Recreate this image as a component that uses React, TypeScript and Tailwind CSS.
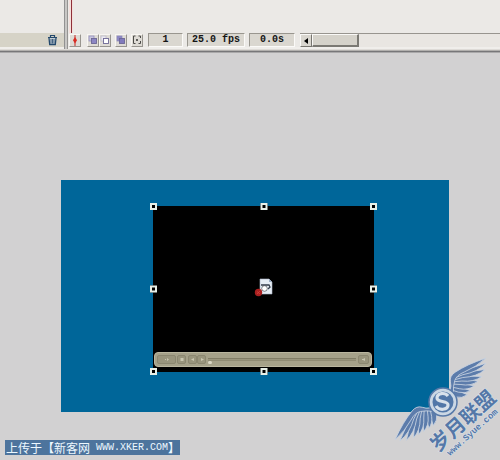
import React from "react";

type ToolProps = { label: string; children: React.ReactNode; className?: string };

function Tool({ label, children, className = "" }: ToolProps) {
  return (
    <button
      type="button"
      aria-label={label}
      className={`flex h-[13px] w-3 shrink-0 items-center justify-center border border-t-[#f8f6f2] border-l-[#f8f6f2] border-r-[#98958f] border-b-[#98958f] bg-[#dedbd5] ${className}`}
    >
      {children}
    </button>
  );
}

function Readout({ children, className }: { children: string; className: string }) {
  return (
    <output
      className={`flex h-[14px] shrink-0 items-center justify-center border border-t-[#99968f] border-l-[#99968f] border-r-[#fbfaf8] border-b-[#fbfaf8] bg-[#dad7d0] font-['Liberation_Mono',monospace] text-[10px] leading-3 font-bold whitespace-pre text-[#151515] ${className}`}
    >
      {children}
    </output>
  );
}

function Onion({ back, front }: { back: string; front: string }) {
  return (
    <svg viewBox="0 0 10 10" className="h-[10px] w-[10px] shrink-0">
      <rect x="1" y="1" width="5" height="5" fill={back} stroke={back === "#eceaf2" ? "#b8b5c6" : "#8b86bd"} strokeWidth="0.7" />
      <rect x="3.5" y="3.5" width="5" height="5" fill={front} stroke="#6d6795" strokeWidth="0.9" />
    </svg>
  );
}

function Timeline() {
  return (
    <header className="flex h-[50px] border-b border-[#dedbd7] bg-[#ebe9e6]">
      <section aria-label="Layers" className="flex w-16 shrink-0 flex-col">
        <div className="flex-1" />
        <div className="flex h-[14px] items-center justify-end bg-[#d6d3c7] pr-[6px]">
          <button type="button" aria-label="Delete layer">
            <svg viewBox="0 0 11 12" className="h-3 w-[11px]" fill="none" stroke="#24496c">
              <path d="M1 3.5h9M3.5 3V1.5h4V3" strokeWidth="1.2" />
              <path d="M2 4l.7 6.5h5.6L9 4" fill="#c4ced5" strokeWidth="1.3" />
              <path d="M4 5v4.5M5.5 5v4.5M7 5v4.5" strokeWidth=".8" />
            </svg>
          </button>
        </div>
        <div className="h-[2px] bg-[#f0eeeb]" />
      </section>
      <div className="w-1 shrink-0 border-x border-l-[#929292] border-r-[#969492] bg-[#c8c7c5]" />
      <section aria-label="Frames" className="flex min-w-0 flex-1 flex-col">
        <div className="flex flex-1 pl-px">
          <div className="flex w-1 justify-center bg-[#f4dfdb]">
            <div className="w-px bg-[#8f3039]" />
          </div>
        </div>
        <div className="flex h-[14px] items-center">
          <Tool label="Center frame" className="ml-px">
            <svg viewBox="0 0 8 11" className="h-[11px] w-2">
              <path d="M4 0v11" stroke="#c52d29" strokeWidth="1" />
              <path d="M4 2l2 3.2L4 8.5 2 5.2z" fill="#d92c23" />
            </svg>
          </Tool>
          <Tool label="Onion skin" className="ml-[6px]">
            <Onion back="#c9c6dd" front="#8c86c4" />
          </Tool>
          <Tool label="Onion skin outlines">
            <Onion back="#eceaf2" front="#ffffff" />
          </Tool>
          <Tool label="Edit multiple frames" className="ml-1">
            <Onion back="#8d87c4" front="#817bbd" />
          </Tool>
          <Tool label="Modify onion markers" className="ml-1">
            <svg viewBox="0 0 10 10" className="h-[10px] w-[10px] shrink-0" fill="none" stroke="#4c4b48">
              <path d="M3.5 1H1.5v7.5h2M6.5 1h2v2M8.5 6v2.5h-2M5 4v2" />
              <path d="M4 5h2" strokeWidth="1.4" />
            </svg>
          </Tool>
          <Readout className="ml-[5px] w-[35px]">1</Readout>
          <Readout className="ml-1 w-[58px]">25.0 fps</Readout>
          <Readout className="ml-1 w-[46px]">0.0s</Readout>
          <div className="ml-[5px] flex h-[14px] flex-1 border-t border-[#98958f] bg-[#e9e6e2]">
            <button
              type="button"
              aria-label="Scroll left"
              className="flex w-3 items-center justify-center border border-t-[#faf9f7] border-l-[#faf9f7] border-r-[#77756f] border-b-[#77756f] bg-[#d9d6cf]"
            >
              <svg viewBox="0 0 4 6" className="h-[6px] w-1">
                <path d="M4 0v6L0 3z" fill="#000" />
              </svg>
            </button>
            <div className="w-[47px] border border-t-[#faf9f7] border-l-[#faf9f7] border-r-2 border-b-2 border-r-[#7b7973] border-b-[#7b7973] bg-[#d5d2ca]" />
          </div>
        </div>
        <div className="h-[2px] bg-[#f0eeeb]" />
      </section>
    </header>
  );
}

function Handle({ className }: { className: string }) {
  return <span className={`absolute h-[7px] w-[7px] border-2 border-[#e8f0e8] bg-black ${className}`} />;
}

function PlayerButton({ label, className, d }: { label: string; className: string; d: string }) {
  return (
    <button
      type="button"
      aria-label={label}
      className={`flex h-[9px] shrink-0 items-center justify-center rounded-[2px] border border-[#8b8770] bg-[#99957d] ${className}`}
    >
      <svg viewBox="0 0 6 5" className="h-[5px] w-[6px]">
        <path d={d} fill="#c9c6b0" />
      </svg>
    </button>
  );
}

function Video() {
  return (
    <div className="relative flex h-[166px] flex-col bg-black pr-[2px] pl-px">
      <div className="flex h-[146px] items-center justify-center pt-4 pr-px">
        <svg viewBox="0 0 20 20" className="h-5 w-5" aria-label="Media clip">
          <path d="M7 2h9l3 3v12H7z" fill="#e6edf5" stroke="#a9b4c5" strokeWidth=".6" />
          <path d="M16 2v3h3" fill="#9aabc3" />
          <path d="M8 8h8l1 2-2 2" fill="none" stroke="#343d4b" strokeWidth="1.3" />
          <circle cx="11.5" cy="11.5" r="2.8" fill="#fff" stroke="#32373e" strokeWidth=".6" />
          <circle cx="5.5" cy="15.5" r="3.7" fill="#a92020" />
          <path d="M4 17l3-3M4 14.5l3 2.5" stroke="#d9483f" strokeWidth=".7" />
        </svg>
      </div>
      <div className="flex h-[15px] items-center rounded-[4px] border border-[#bab69f] bg-[#a5a189] px-[2px]">
        <PlayerButton label="Play" className="w-[19px]" d="M1 2h1v1H1zM3 1l2 1.5L3 4z" />
        <PlayerButton label="Stop" className="ml-px w-[9px]" d="M1.500 1h3v3h-3z" />
        <PlayerButton label="Previous" className="ml-[2px] w-[9px]" d="M4 1v3L1 2.500z" />
        <PlayerButton label="Next" className="w-[9px]" d="M2 1v3l3-1.500z" />
        <input
          type="range"
          aria-label="Seek"
          defaultValue={0}
          className="mx-[2px] h-[9px] min-w-0 flex-1 appearance-none bg-transparent [&::-webkit-slider-runnable-track]:h-[3px] [&::-webkit-slider-runnable-track]:border-y [&::-webkit-slider-runnable-track]:border-t-[#817d66] [&::-webkit-slider-runnable-track]:border-b-[#8f8b73] [&::-webkit-slider-runnable-track]:bg-[#99957d] [&::-webkit-slider-thumb]:mt-[2px] [&::-webkit-slider-thumb]:h-[3px] [&::-webkit-slider-thumb]:w-[4px] [&::-webkit-slider-thumb]:appearance-none [&::-webkit-slider-thumb]:rounded-full [&::-webkit-slider-thumb]:bg-[#d9d6c4]"
        />
        <PlayerButton label="Mute" className="w-[11px]" d="M1 2h1l2-1v3L2 3H1zM5 1.500v2" />
      </div>
      <Handle className="-top-[3px] -left-[3px]" />
      <Handle className="-top-[3px] left-1/2 -translate-x-1/2" />
      <Handle className="-top-[3px] -right-[3px]" />
      <Handle className="top-1/2 -left-[3px] -translate-y-1/2" />
      <Handle className="top-1/2 -right-[3px] -translate-y-1/2" />
      <Handle className="-bottom-[3px] -left-[3px]" />
      <Handle className="-bottom-[3px] left-1/2 -translate-x-1/2" />
      <Handle className="-right-[3px] -bottom-[3px]" />
    </div>
  );
}

function Wing() {
  return (
    <g fill="#5c7cab" stroke="#c9d4e2" strokeWidth=".8" strokeLinejoin="round">
      <path d="M13 0L16 -4L23 11Q16 10 13 5Z" />
      <path d="M14 -4L19 -7L28 10Q22 9 18 3Z" />
      <path d="M16 -6L21 -9L34 9Q26 8 21 1Z" />
      <path d="M18 -8L24 -11L40 8Q31 7 25 -1Z" />
      <path d="M20 -9L26 -12L46 7Q36 6 28 -3Z" />
      <path d="M21 -10L28 -13L53 4Q42 4 31 -5Z" />
      <path d="M22 -11L29 -13L58 0Q46 1 33 -7Z" />
      <path d="M13 -4Q17 -6 19 -10Q22 -15 29 -14Q43 -12 61 -4Q47 -4 36 -8Q28 -11 23 -8Q18 -5 14 0Z" />
    </g>
  );
}

function Watermark() {
  return (
    <svg viewBox="0 0 130 115" className="absolute right-0 bottom-0 h-[115px] w-[130px]" aria-label="岁月联盟">
      <g transform="translate(73 57) rotate(-42)">
        <Wing />
        <g transform="scale(-1 1)">
          <Wing />
        </g>
      </g>
      <circle cx="73" cy="57" r="14" fill="#cbd7e4" stroke="#5879a8" strokeWidth="1.500" />
      <circle cx="73" cy="57" r="10.500" fill="#5277a8" />
      <path
        d="M78 51C75 47 67 48 67 53C67 58 78 55 78 60C78 65 69 66 66 61"
        fill="none"
        stroke="#d8e1eb"
        strokeWidth="3.200"
      />
      <g fill="#5578a8" stroke="#dce4ec" strokeWidth="1" paintOrder="stroke">
        <text
          transform="translate(68 108) rotate(-42)"
          fontSize="20"
          className="font-['Noto_Sans_CJK_SC',sans-serif] font-bold"
        >
          岁月联盟
        </text>
        <text
          transform="translate(80 111) rotate(-42)"
          fontSize="9"
          className="font-['Liberation_Mono',monospace] font-bold"
        >
          www.Syue.com
        </text>
      </g>
    </svg>
  );
}

export default function App() {
  return (
    <div className="relative flex min-h-screen flex-col bg-[#d2d1d2]">
      <Timeline />
      <div className="h-[3px] border-t border-b border-t-[#b2b0ae] border-b-[#aaa9aa] bg-[#777779]" />
      <main className="flex-1 pt-[127px] pr-[51px] pl-[61px]">
        <div className="h-[232px] bg-[#006699] pt-[26px] pr-[75px] pl-[92px]">
          <Video />
        </div>
      </main>
      <footer className="px-[5px] pb-[5px]">
        <p className="flex h-[15px] w-[175px] items-center bg-[#4d749d] pl-px font-['Noto_Sans_CJK_SC',sans-serif] text-[12px] leading-[15px] whitespace-pre text-[#edf8ff]">
          上传于【新客网
          <span className="font-['Liberation_Mono',monospace] text-[10px]"> WWW.XKER.COM</span>】
        </p>
      </footer>
      <Watermark />
    </div>
  );
}
